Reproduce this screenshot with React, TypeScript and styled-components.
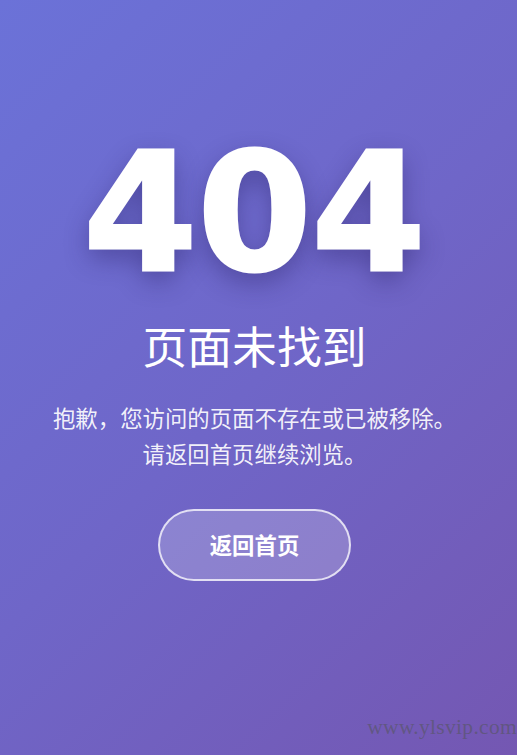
import * as React from "react"
import styled, { createGlobalStyle } from "styled-components"

const GlobalStyle = createGlobalStyle`
  html, body {
    margin: 0;
    padding: 0;
  }
  body {
    font-family: "Noto Sans CJK SC", "Liberation Sans", sans-serif;
  }
`

const Page = styled.div`
  position: relative;
  min-height: 100vh;
  box-sizing: border-box;
  padding: 132px 23px 40px 15px;
  display: flex;
  flex-direction: column;
  align-items: center;
  text-align: center;
  color: #fff;
  background: linear-gradient(135deg, #6b72d8 0%, #6f66c8 50%, #7457b2 100%);
  overflow: hidden;
`

const Code = styled.h1`
  margin: 0;
  font-family: "DejaVu Sans", "Liberation Sans", sans-serif;
  font-size: 164px;
  font-weight: 700;
  line-height: 1;
  letter-spacing: 0;
  -webkit-text-stroke: 3px #fff;
  text-shadow: 0 10px 26px rgba(40, 30, 100, 0.45);
`

const Title = styled.h2`
  margin: 20px 0 0;
  font-size: 44.8px;
  font-weight: 400;
  line-height: 1.3;
`

const Message = styled.p`
  margin: 25px 0 0;
  font-size: 22.4px;
  line-height: 36px;
  color: rgba(255, 255, 255, 0.92);
`

const HomeButton = styled.a`
  display: inline-block;
  margin-top: 38px;
  padding: 17px 50px;
  border: 2px solid rgba(255, 255, 255, 0.75);
  border-radius: 40px;
  background: rgba(255, 255, 255, 0.2);
  color: #fff;
  font-size: 22.4px;
  font-weight: 700;
  line-height: 33.6px;
  text-decoration: none;
`

const Watermark = styled.span`
  position: absolute;
  right: 0;
  bottom: 15px;
  font-family: "Liberation Serif", serif;
  font-size: 21.5px;
  color: rgba(85, 85, 95, 0.6);
  letter-spacing: 0.3px;
`

export default function App() {
  return (
    <>
      <GlobalStyle />
      <Page>
        <Code>404</Code>
        <Title>页面未找到</Title>
        <Message>
          抱歉，您访问的页面不存在或已被移除。
          <br />
          请返回首页继续浏览。
        </Message>
        <HomeButton href="#">返回首页</HomeButton>
        <Watermark>www.ylsvip.com</Watermark>
      </Page>
    </>
  )
}
